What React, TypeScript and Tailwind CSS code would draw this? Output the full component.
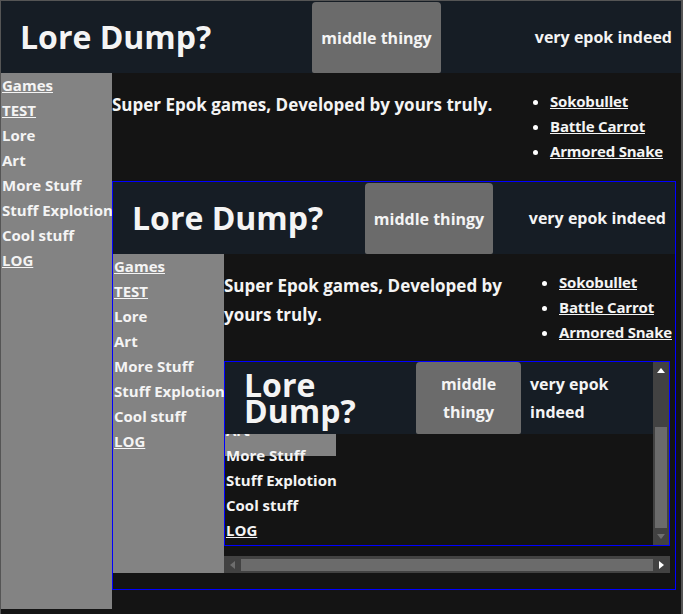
const links = [
  { label: "Games", u: true },
  { label: "TEST", u: true },
  { label: "Lore", u: false },
  { label: "Art", u: false },
  { label: "More Stuff", u: false },
  { label: "Stuff Explotion", u: false },
  { label: "Cool stuff", u: false },
  { label: "LOG", u: true },
]

const games = ["Sokobullet", "Battle Carrot", "Armored Snake"]

function NavLink({ label, u }: { label: string; u: boolean }) {
  return (
    <a className={`block h-[25px] whitespace-nowrap pl-[1px] text-[15px] leading-[25px] ${u ? "underline" : ""}`}>
      {label}
    </a>
  )
}

function Header({ level }: { level: number }) {
  const title = ["w-[311px] pl-[19px]", "w-[252px] pl-[19px]", "w-[191px] pl-[19px] leading-[26px]"][level]
  const box = ["mt-[1px] w-[129px]", "mt-[1px] w-[128px]", "w-[105px] leading-[28px]"][level]
  return (
    <header className="flex h-[72px] items-center bg-[#161d25]">
      <h1 className={`shrink-0 text-[32px] ${title}`}>Lore Dump?</h1>
      <div className={`flex shrink-0 items-center justify-center self-stretch rounded-t-[4px] rounded-b-[2px] bg-[#6b6b6b] text-center text-[16px] ${box}`}>
        middle thingy
      </div>
      <div className="flex flex-1 justify-end px-[9px] text-[16px] leading-[28px]">
        <span>very epok indeed</span>
      </div>
    </header>
  )
}

function Intro({ level }: { level: number }) {
  return (
    <div className="flex items-start">
      <p className={`mt-[17px] text-[17px] leading-[29px] ${level === 0 ? "w-[424px]" : "w-[321px]"}`}>
        Super Epok games, Developed by yours truly.
      </p>
      <ul className="my-4 list-disc pl-[14px] text-[15px] leading-[25px] tracking-[-0.2px]">
        {games.map((g) => (
          <li key={g} className="whitespace-nowrap marker:text-white">
            <a className="underline">{g}</a>
          </li>
        ))}
      </ul>
    </div>
  )
}

function Arrow({ dir, light }: { dir: "up" | "down" | "left" | "right"; light?: boolean }) {
  const pts = {
    up: "4,0 8,5 0,5",
    down: "0,0 8,0 4,5",
    left: "5,0 5,8 0,4",
    right: "0,0 5,4 0,8",
  }[dir]
  const vertical = dir === "up" || dir === "down"
  return (
    <svg width={vertical ? 8 : 5} height={vertical ? 5 : 8} viewBox={vertical ? "0 0 8 5" : "0 0 5 8"}>
      <polygon points={pts} fill={light ? "#ffffff" : "#6e6e6e"} />
    </svg>
  )
}

function InnerFrame() {
  return (
    <div className="flex h-[185px] w-[446px] border border-[#0000ff]">
      <div className="w-[428px]">
        <Header level={2} />
        <div className="h-[111px] overflow-hidden bg-[linear-gradient(#838383_22px,transparent_22px)] bg-[length:111px_100%] bg-no-repeat">
          <div className="-mt-[16px]">
            {links.slice(3).map((l) => (
              <NavLink key={l.label} {...l} />
            ))}
          </div>
        </div>
      </div>
      {/* scrollbar */}
      <div className="flex w-[16px] flex-col items-center bg-[#424242]">
        <div className="flex h-[16px] items-center justify-center">
          <Arrow dir="up" light />
        </div>
        <div className="mt-[49px] h-[101px] w-[12px] bg-[#6b6b6b]" />
        <div className="flex flex-1 items-center justify-center">
          <Arrow dir="down" />
        </div>
      </div>
    </div>
  )
}

function MiddleFrame() {
  return (
    <div className="w-[564px] border border-[#0000ff]">
      <Header level={1} />
      <div className="flex">
        <nav className="h-[319px] w-[111px] shrink-0 bg-[#838383]">
          {links.map((l) => (
            <NavLink key={l.label} {...l} />
          ))}
        </nav>
        <div className="min-w-0 flex-1">
          <Intro level={1} />
          <InnerFrame />
          <div className="mt-[10px] flex h-[17px] w-[446px] items-center bg-[#424242]">
            <div className="flex w-[17px] justify-center">
              <Arrow dir="left" />
            </div>
            <div className="h-[12px] flex-1 bg-[#6b6b6b]" />
            <div className="flex w-[17px] justify-center">
              <Arrow dir="right" light />
            </div>
          </div>
        </div>
      </div>
      <div className="h-[16px]" />
    </div>
  )
}

export default function App() {
  return (
    <div className="h-[614px] w-[683px] overflow-hidden border-t border-r-2 border-l border-[#555555] bg-[#141414] font-['Open_Sans',sans-serif] font-bold text-[#f4f4f4]">
      <Header level={0} />
      <div className="flex">
        <nav className="h-[536px] w-[111px] shrink-0 bg-[#838383]">
          {links.map((l) => (
            <NavLink key={l.label} {...l} />
          ))}
        </nav>
        <div className="min-w-0 flex-1">
          <Intro level={0} />
          <div className="mt-[1px]">
            <MiddleFrame />
          </div>
        </div>
      </div>
    </div>
  )
}
